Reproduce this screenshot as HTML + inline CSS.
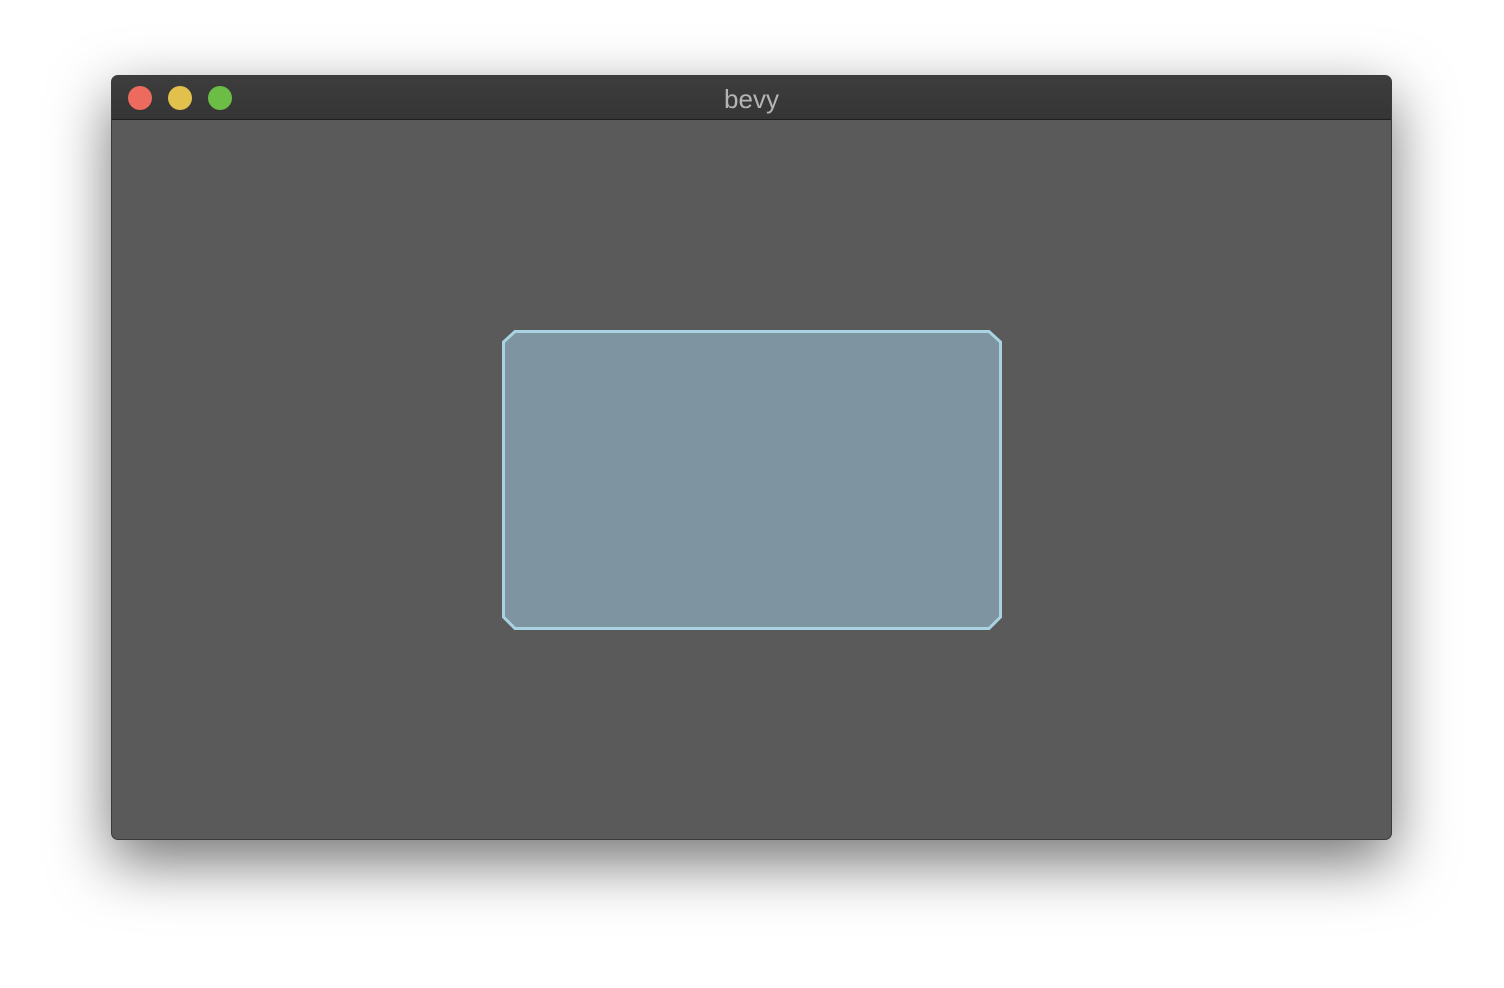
<!DOCTYPE html>
<html><head><style>
html,body{margin:0;padding:0;width:1504px;height:988px;background:#fff;overflow:hidden}
.win{position:absolute;left:111px;top:75px;width:1281px;height:765px;border-radius:7px;background:#5a5a5a;box-shadow:0 22px 60px rgba(0,0,0,.55);overflow:hidden;border:1px solid #3a3a3a;box-sizing:border-box}
.tb{position:absolute;left:0;top:0;right:0;height:43px;background:linear-gradient(#3d3d3d,#353535);border-bottom:1px solid #1f1f1f}
.d{position:absolute;top:10px;width:24px;height:24px;border-radius:50%}
.t{position:absolute;left:0;right:0;top:8px;text-align:center;font:26px "Liberation Sans",sans-serif;color:#b4b4b4}
</style></head><body>
<div class="win">
<div class="tb">
<div class="d" style="left:16px;background:#ed6a5e"></div>
<div class="d" style="left:56px;background:#e2c04c"></div>
<div class="d" style="left:96px;background:#6cbd45"></div>
<div class="t">bevy</div>
</div>
</div>
<svg style="position:absolute;left:0;top:0" width="1504" height="988">
<polygon points="515,331.5 989,331.5 1000.5,342 1000.5,617 989,628.5 515,628.5 503.5,617 503.5,342" fill="#7e95a1" stroke="#a9d3e3" stroke-width="3"/>
</svg>
</body></html>
